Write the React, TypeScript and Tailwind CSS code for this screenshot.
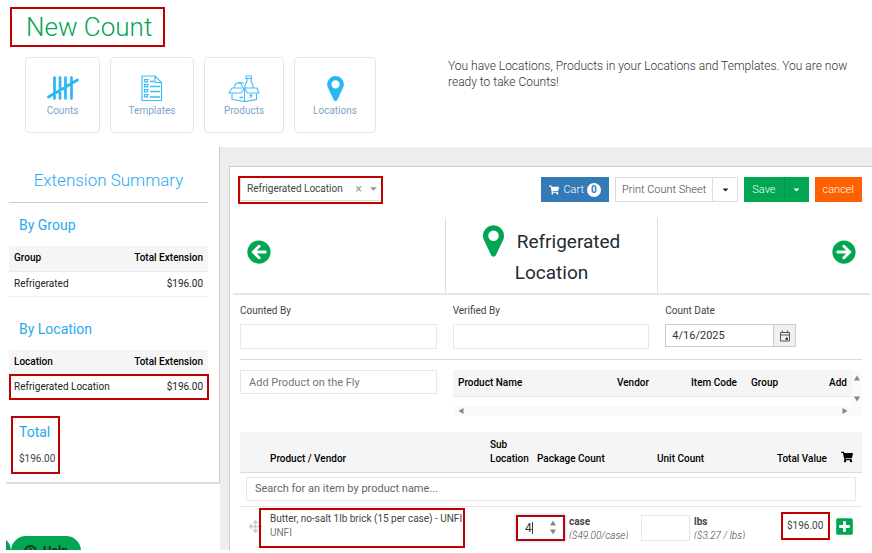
import type { ReactNode } from "react";
import {
  FaArrowCircleLeft,
  FaArrowCircleRight,
  FaArrowsAlt,
  FaCaretDown,
  FaPlusSquare,
  FaShoppingCart,
} from "react-icons/fa";

function Pin({ className }: { className: string }) {
  return (
    <svg viewBox="0 -1408 1024 1536" className={className} fill="currentColor" aria-hidden="true">
      <path
        transform="scale(1,-1)"
        d="M768 896q0 106 -75 181t-181 75t-181 -75t-75 -181t75 -181t181 -75t181 75t75 181zM1024 896q0 -109 -33 -179l-364 -774q-16 -33 -47.5 -52t-67.5 -19t-67.5 19t-46.5 52l-365 774q-33 70 -33 179q0 212 150 362t362 150t362 -150t150 -362z"
      />
    </svg>
  );
}

function Tally() {
  return (
    <svg viewBox="0 0 32 26" className="h-[26px] w-8" fill="none" stroke="#29b6f6" strokeWidth="2.7" strokeLinecap="round">
      <path d="M7.5 2.5v21M13 2.5v21M18.500 2.5v21M24.500 2.5v21M1.500 22L30.500 5" />
    </svg>
  );
}

function Checklist() {
  return (
    <svg viewBox="0 0 22 26" className="h-[26px] w-[22px]" fill="none" stroke="#3dbdf8" strokeWidth="1.2">
      <path d="M1 1h13l6.500 6.500V25.500H1zM14 1v6.500h6.500" />
      <path d="M3.500 4.500h3v2.500h-3zM3.500 9.500h3v2.500h-3zM3.500 14.500h3v2.500h-3zM3.500 19.500h3v2.500h-3z" />
      <path d="M4 5.500l1.200 1.200L8 4M4 10.500l1.200 1.200L8 9M4 15.500l1.200 1.200L8 14M4 20.500l1.200 1.200L8 19" strokeWidth=".8" />
      <path d="M9 6.500h4M9 11.500h10M9 16.500h10M9 22h10" strokeWidth="1.4" />
    </svg>
  );
}

function ProductBox() {
  return (
    <svg viewBox="0 0 32 27" className="h-[27px] w-8" fill="none" stroke="#3dbdf8" strokeWidth="1.1" strokeLinejoin="round">
      <path d="M4 13H29L31 18H19.500L16.500 13.500L13 18H1z" />
      <path d="M4 18.500v6l12.500 2l12-2v-6M16.500 14v12.500" />
      <path d="M18 1h5.500v2.500H18zM19 3.500v3q-1.500 1.500-2 4V13M23 3.500v3q1.500 1.500 2 4V13" />
      <path d="M6.500 12.500q0-4.500 4-4.500q3 0 4 4M9.500 8.500Q12 6 15.500 8.500" />
      <path d="M11.500 22.500h3.500M23 23v-3M22 21l1-1.500l1 1.500" strokeWidth="1.3" />
    </svg>
  );
}

function CalendarIcon() {
  return (
    <svg viewBox="0 0 12 12" className="size-3" fill="none" stroke="#555" strokeWidth="1">
      <path d="M1.500 2.500h9v8.500h-9zM1.500 5h9M3.500 .5v2M8.500 .5v2" />
      <path d="M7 8h1.500v1.500H7z" fill="#333" stroke="#333" />
    </svg>
  );
}

/* Red call-out frame laid over its relative parent */
function Frame({ className }: { className: string }) {
  return <span aria-hidden="true" className={`pointer-events-none absolute z-10 border-2 border-[#c00000] ${className}`} />;
}

function Tile({ label, width, children }: { label: string; width: string; children: ReactNode }) {
  return (
    <a href="#" className={`flex h-[76px] flex-col items-center rounded border border-[#e6e6e6] pt-4 ${width}`}>
      <span className="flex h-7 items-center">{children}</span>
      <span className="mt-[2px] text-[10px] leading-[14px] text-[#7fa3c7]">{label}</span>
    </a>
  );
}

function SummaryTable({ head, name, framed }: { head: string; name: string; framed?: boolean }) {
  return (
    <table className="w-full border-collapse text-[10px] leading-[14px] text-[#222]">
      <thead>
        <tr className="h-[25px] border-b border-[#e8ecee] bg-[#f5f5f5] text-black">
          <th className="pl-[5px] text-left font-medium">{head}</th>
          <th className="pr-[5px] text-right font-medium">Total Extension</th>
        </tr>
      </thead>
      <tbody>
        <tr className="relative h-[25px] border-b border-[#eee]">
          <td className="pl-[5px]">
            {name}
            {framed && <Frame className="-top-px -right-px -bottom-px left-0" />}
          </td>
          <td className="pr-[5px] text-right">$196.00</td>
        </tr>
      </tbody>
    </table>
  );
}

function Sidebar() {
  return (
    <aside className="w-[220px] shrink-0 text-[#29a9ef]">
      <div className="ml-[6px] h-[337px] border-r border-b-2 border-[#ddd] border-r-[#ccc] pr-[11px] pl-[3px]">
        <h2 className="h-14 border-b border-[#ccc] pt-[21px] text-center text-[17px] leading-[24px] font-light">
          Extension Summary
        </h2>
        <h3 className="h-[43px] pt-3 pl-[10px] text-sm leading-5">By Group</h3>
        <SummaryTable head="Group" name="Refrigerated" />
        <h3 className="mt-[10px] h-[43px] pt-3 pl-[10px] text-sm leading-5">By Location</h3>
        <SummaryTable head="Location" name="Refrigerated Location" framed />
        <div className="relative mt-4 ml-[2px] h-[58px] w-[49px] pt-[6px] pl-2">
          <Frame className="inset-0" />
          <h3 className="text-sm leading-5">Total</h3>
          <p className="mt-[10px] text-[10px] leading-[14px] text-[#444]">$196.00</p>
        </div>
      </div>
    </aside>
  );
}

function Toolbar() {
  return (
    <div className="flex h-[25px] items-start justify-between">
      <div className="relative flex h-6 w-[142px] items-center border-b border-l border-[#ddd] text-[#999]">
        <Frame className="-top-px -right-px -bottom-[4px] -left-[3px]" />
        <select aria-label="Location" className="h-full flex-1 appearance-none bg-transparent pl-[6px] text-[10px] text-[#444] outline-none">
          <option>Refrigerated Location</option>
        </select>
        <button type="button" aria-label="Clear location" className="mr-[6px] text-xs leading-none">×</button>
        <FaCaretDown className="mr-[3px] size-[11px]" />
      </div>
      <div className="flex h-[25px] items-stretch text-[11px] leading-[25px] font-light">
        <button type="button" className="flex items-center bg-[#337ab7] px-2 text-white">
          <FaShoppingCart className="mr-1 size-[10px]" />
          Cart
          <span className="ml-[3px] flex size-[14px] items-center justify-center rounded-full bg-white text-[10px] font-bold text-[#337ab7]">0</span>
        </button>
        <button type="button" className="ml-[6px] border border-[#ddd] px-[6px] leading-[24px] text-[#444]">Print Count Sheet</button>
        <button type="button" aria-label="More print options" className="-ml-px flex w-[26px] items-center justify-center border border-[#ddd] text-[#222]">
          <FaCaretDown className="size-[9px]" />
        </button>
        <button type="button" className="ml-[6px] bg-[#00a651] px-2 text-white">Save</button>
        <button type="button" aria-label="More save options" className="flex w-[25px] items-center justify-center border-l border-[#039347] bg-[#00a651] text-white">
          <FaCaretDown className="size-[9px]" />
        </button>
        <button type="button" className="ml-[6px] bg-[#ff6000] px-2 text-white">cancel</button>
      </div>
    </div>
  );
}

function LocationNav() {
  return (
    <div className="mt-4 ml-[3px] mr-[2px] grid h-[77px] grid-cols-3 border-b-2 border-[#e6e6e6] text-[#00a651]">
      <div className="flex items-center pb-2 pl-[14px]">
        <button type="button" aria-label="Previous location"><FaArrowCircleLeft className="size-6" /></button>
      </div>
      <div className="border-x border-[#ddd] pt-[7px] text-center">
        <h1 className="text-[19px] leading-[31px] text-[#222b33]">
          <Pin className="mr-[13px] inline h-8 w-[21px] align-[-9px] text-[#00a651]" />
          Refrigerated
          <br />
          Location
        </h1>
      </div>
      <div className="flex items-center justify-end pr-[14px] pb-2">
        <button type="button" aria-label="Next location"><FaArrowCircleRight className="size-6" /></button>
      </div>
    </div>
  );
}

function CountFields() {
  return (
    <div className="grid grid-cols-3 gap-4 border-b border-[#ddd] pt-[9px] pb-[10px] text-[10px] leading-[14px] text-[#444]">
      <div>
        <label htmlFor="counted">Counted By</label>
        <input id="counted" className="mt-[6px] block h-[25px] w-full border border-[#e6eaec] px-2" />
      </div>
      <div>
        <label htmlFor="verified">Verified By</label>
        <input id="verified" className="mt-[6px] block h-[25px] w-full border border-[#e6eaec] px-2" />
      </div>
      <div>
        <label htmlFor="date">Count Date</label>
        <div className="mt-[6px] flex h-[23px] w-[131px] border border-[#ccc]">
          <input id="date" defaultValue="4/16/2025" className="min-w-0 flex-1 px-[6px] text-[11px] text-[#333]" />
          <button type="button" aria-label="Open calendar" className="flex w-[22px] items-center justify-center border-l border-[#ccc] bg-[#f0f0f0]">
            <CalendarIcon />
          </button>
        </div>
      </div>
    </div>
  );
}

function AddProduct() {
  return (
    <div className="flex gap-4 pt-[10px]">
      <input
        aria-label="Add Product on the Fly"
        placeholder="Add Product on the Fly"
        className="h-6 w-[197px] border border-[#e2e8ec] px-2 text-[11px] text-[#666] placeholder:text-[#777]"
      />
      <div className="min-w-0 flex-1">
        <div className="flex h-9">
          <table className="h-[26px] flex-1 table-fixed border-collapse text-[10px] leading-[14px] text-black">
            <thead>
              <tr className="h-[26px] border-b border-[#e8ecee] bg-[#f5f5f5] text-left">
                <th className="pl-[5px] font-medium">Product Name</th>
                <th className="w-[74px] font-medium">Vendor</th>
                <th className="w-[60px] font-medium">Item Code</th>
                <th className="w-[60px] font-medium">Group</th>
                <th className="w-[41px] pr-[5px] text-right font-medium">Add</th>
              </tr>
            </thead>
          </table>
          <div className="flex w-[10px] flex-col items-center justify-between bg-[#fafafa] pt-[5px] pb-1">
            <Triangle turn="" />
            <Triangle turn="rotate-180" />
          </div>
        </div>
        <div className="flex h-[10px] items-center justify-between bg-[#fafafa] pr-[14px] pl-[5px]">
          <Triangle turn="-rotate-90" />
          <Triangle turn="rotate-90" />
        </div>
      </div>
    </div>
  );
}

function Triangle({ turn }: { turn: string }) {
  return (
    <svg viewBox="0 0 6 6" className={`size-[6px] ${turn}`} fill="#858585" aria-hidden="true">
      <path d="M3 .5L6 5.500H0z" />
    </svg>
  );
}

function CountTable() {
  return (
    <table className="mt-4 w-full table-fixed border-collapse text-[10px] leading-[14px] text-[#444]">
      <colgroup>
        <col className="w-[30px]" />
        <col />
        <col className="w-[26px]" />
        <col className="w-[125px]" />
        <col className="w-[136px]" />
        <col className="w-[59px]" />
        <col className="w-[26px]" />
      </colgroup>
      <thead>
        <tr className="h-10 border-b border-[#ddd] bg-[#f5f5f5] text-left align-bottom text-black">
          <th aria-label="Reorder" />
          <th className="pb-[6px] font-medium">Product / Vendor</th>
          <th className="pb-[6px] font-medium">Sub<br />Location</th>
          <th className="pb-[6px] pl-[21px] font-medium">Package Count</th>
          <th className="pb-[6px] pl-4 font-medium">Unit Count</th>
          <th className="pb-[6px] font-medium whitespace-nowrap">Total Value</th>
          <th className="pb-[9px] pl-[5px]"><FaShoppingCart className="size-3" aria-label="Cart" /></th>
        </tr>
      </thead>
      <tbody>
        <tr className="border-b border-[#e6e6e6]">
          <td colSpan={7} className="px-[6px] pt-1 pb-[5px]">
            <input
              aria-label="Search for an item by product name"
              placeholder="Search for an item by product name..."
              className="block h-6 w-full border border-[#e2e8ec] px-2 text-[11px] placeholder:text-[#666]"
            />
          </td>
        </tr>
        <tr className="align-top">
          <td className="pt-[13px] pl-[9px]"><FaArrowsAlt className="size-[13px] text-[#ccc]" /></td>
          <td className="relative pt-[5px] whitespace-nowrap">
            Butter, no-salt 1lb brick (15 per case) - UNFI
            <br />
            <span className="text-[#777]">UNFI</span>
            <Frame className="top-px -left-[11px] h-10 w-[206px]" />
          </td>
          <td />
          <td className="pt-2">
            <div className="flex">
              <div className="relative flex h-[26px] w-[49px] items-center border border-[#80bdff] pr-2 pl-2 shadow-[0_0_3px_#80bdff]">
                <Frame className="-inset-px" />
                <input aria-label="Package count" defaultValue="4" className="w-[7px] text-xs text-[#333] outline-none" />
                <span className="h-3 w-px bg-[#333]" />
                <span className="ml-auto flex flex-col gap-[3px]">
                  <Triangle turn="" />
                  <Triangle turn="rotate-180" />
                </span>
              </div>
              <div className="ml-1 h-6 overflow-hidden">
                <b>case</b>
                <br />
                <i className="font-light">($49.00/case)</i>
              </div>
            </div>
          </td>
          <td className="pt-2">
            <div className="flex">
              <input aria-label="Unit count" className="h-[26px] w-[49px] border border-[#e6e6e6] px-2" />
              <div className="ml-1 h-6 overflow-hidden">
                <b>lbs</b>
                <br />
                <i className="font-light">($3.27 / lbs)</i>
              </div>
            </div>
          </td>
          <td className="relative pt-3 pl-[10px]">
            $196.00
            <Frame className="top-[5px] left-1 h-7 w-[49px]" />
          </td>
          <td className="pt-[10px]">
            <button type="button" aria-label="Add to cart" className="-ml-px block"><FaPlusSquare className="size-[19px] text-[#00a651]" /></button>
          </td>
        </tr>
      </tbody>
    </table>
  );
}

export default function App() {
  return (
    <div className="flex h-screen flex-col overflow-hidden bg-white pb-[3px] font-['Roboto',sans-serif]">
      <header className="flex h-[147px] shrink-0 justify-between pr-4 pl-[10px]">
        <div className="pt-[7px]">
          <div className="relative flex h-10 w-[155px] items-center pl-4">
            <Frame className="inset-0" />
            <h1 className="text-[26px] leading-8 font-light whitespace-nowrap text-[#00a651]">New Count</h1>
          </div>
          <nav className="mt-[10px] flex gap-[10px] pl-[15px]">
            <Tile label="Counts" width="w-[75px]"><Tally /></Tile>
            <Tile label="Templates" width="w-[84px]"><Checklist /></Tile>
            <Tile label="Products" width="w-[80px]"><ProductBox /></Tile>
            <Tile label="Locations" width="w-[82px]"><Pin className="h-[25px] w-[17px] text-[#29b6f6]" /></Tile>
          </nav>
        </div>
        <p className="w-[408px] pt-[58px] text-xs leading-4 font-light text-[#333]">
          You have Locations, Products in your Locations and Templates. You are now ready to take Counts!
        </p>
      </header>
      <div className="relative flex min-h-0 flex-1 overflow-hidden">
        <Sidebar />
        <main className="min-w-0 flex-1 bg-[#ededed] pt-[19px] pl-[9px]">
          <div className="h-full border-t border-l border-[#ccc] bg-white">
            <div className="pt-[10px] pr-[10px] pl-[10px]">
              <Toolbar />
            </div>
            <LocationNav />
            <div className="pr-[10px] pl-[10px]">
              <CountFields />
              <AddProduct />
              <CountTable />
            </div>
          </div>
        </main>
        <div className="absolute -bottom-[16px] left-[6px] flex overflow-hidden">
          <span className="-ml-[25px] h-[30px] w-[30px] rounded-full bg-[#00a651]" />
          <button type="button" className="flex h-[30px] w-[70px] items-center justify-center gap-[6px] rounded-full bg-[#00a651] text-xs font-bold text-[#12331f]">
            <span className="flex size-[13px] items-center justify-center rounded-full border-2 border-[#12331f] text-[8px]">?</span>
            Help
          </button>
        </div>
      </div>
    </div>
  );
}
